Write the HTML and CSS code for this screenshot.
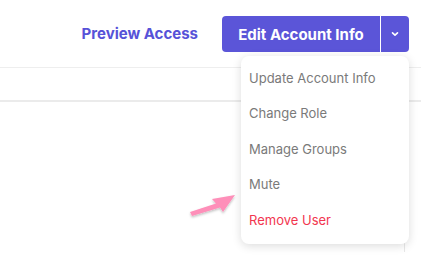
FILE: index.html
```html
<!DOCTYPE html>
<html lang="en">
<head>
    <meta charset="UTF-8">
    <meta name="viewport" content="width=device-width, initial-scale=1.0">
    <title>User - Edit Account</title>
    <link rel="stylesheet" href="styles.css">
</head>
<body>
    <header class="user-header">
        <a class="preview-link" href="#">Preview Access</a>
        <div class="split-button">
            <button class="split-main" type="button">Edit Account Info</button>
            <button class="split-toggle" type="button" aria-label="More actions">
                <svg width="8" height="6" viewBox="0 0 8 6"><path d="M1.5 1.8 L4 4.2 L6.5 1.8" fill="none" stroke="#fff" stroke-width="1.6" stroke-linecap="round" stroke-linejoin="round"/></svg>
            </button>

            <ul class="dropdown-menu">
                <li>Update Account Info</li>
                <li>Change Role</li>
                <li>Manage Groups</li>
                <li>Mute</li>
                <li class="danger">Remove User</li>
            </ul>
        </div>
    </header>

    <div class="tabs-row"></div>

    <main class="content">
        <div class="content-panel"></div>
    </main>

    <!-- pointer arrow annotation -->
    <svg class="pointer-arrow" width="56" height="30" viewBox="0 0 56 30">
        <defs>
            <filter id="arrowShadow" x="-20%" y="-30%" width="140%" height="170%">
                <feDropShadow dx="0" dy="1.5" stdDeviation="1.2" flood-color="#000" flood-opacity="0.25"/>
            </filter>
        </defs>
        <path d="M4 22 L30 13.5 L26 9 L49 5 L37 22 L34 17.5 L6 26 Z" fill="#fe8fb9" filter="url(#arrowShadow)"/>
    </svg>
</body>
</html>
```

FILE: styles.css
```css
body {
    font-family: Inter, "Noto Sans", sans-serif;
    margin: 0;
    padding: 0;
    background-color: #fff;
    height: 264px;
    overflow: hidden;
    position: relative;
}

.user-header {
    display: flex;
    justify-content: flex-end;
    align-items: flex-start;
    gap: 24px;
    height: 68px;
    padding: 0 12px 0 0;
    box-sizing: border-box;
    border-bottom: 1px solid #eeeeee;
}

.preview-link {
    color: #5752d8;
    font-weight: 700;
    font-size: 15px;
    line-height: 36px;
    margin-top: 16px;
    text-decoration: none;
}

.split-button {
    position: relative;
    display: flex;
    height: 36px;
    margin-top: 16px;
}

.split-main,
.split-toggle {
    background-color: #5b55d8;
    color: white;
    border: none;
    font-family: inherit;
    font-weight: 700;
    font-size: 15px;
    cursor: pointer;
}

.split-main {
    padding: 0 16px;
    border-radius: 4px 0 0 4px;
    width: 158px;
}

.split-toggle {
    width: 28px;
    margin-left: 1px;
    border-radius: 0 4px 4px 0;
    display: flex;
    align-items: center;
    justify-content: center;
    padding: 0;
}

.dropdown-menu {
    position: absolute;
    top: 40px;
    right: 0;
    width: 168px;
    margin: 0;
    padding: 5px 0 6px;
    list-style: none;
    background-color: #fff;
    border-radius: 8px;
    box-shadow: 0 2px 10px rgba(0, 0, 0, 0.14);
    z-index: 2;
}

.dropdown-menu li {
    height: 35.4px;
    line-height: 35.4px;
    padding: 0 8px;
    font-size: 13px;
    color: #7a7a7a;
}

.dropdown-menu li.danger {
    color: #f2364f;
}

.tabs-row {
    height: 32px;
    border-bottom: 2px solid #ebebeb;
}

.content {
    display: flex;
    justify-content: flex-end;
    padding-right: 16px;
}

.content-panel {
    width: 1px;
    height: 150px;
    background-color: #e8e8e8;
}

.pointer-arrow {
    position: absolute;
    left: 186px;
    top: 190px;
}
```
